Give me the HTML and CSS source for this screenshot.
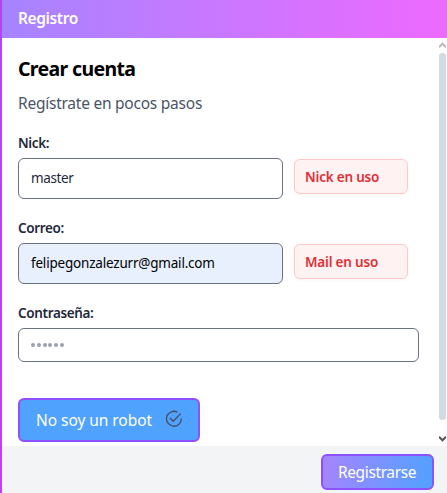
FILE: index.html
```html
<!DOCTYPE html>
<html lang="es">
<head>
<meta charset="utf-8">
<title>Registro</title>
<link rel="stylesheet" href="styles.css">
</head>
<body>
<div class="modal">
  <header class="modal-header"><span>Registro</span></header>
  <main class="modal-body">
    <form class="form">
      <h1 class="title"><span>Crear cuenta</span></h1>
      <p class="subtitle"><span>Regístrate en pocos pasos</span></p>
      <div class="field">
        <div class="label"><span class="t-nick">Nick:</span></div>
        <div class="row">
          <div class="input"><span class="t-master">master</span></div>
          <div class="error"><span class="t-error">Nick en uso</span></div>
        </div>
      </div>
      <div class="field">
        <div class="label"><span class="t-correo">Correo:</span></div>
        <div class="row">
          <div class="input autofill"><span class="t-mail">felipegonzalezurr@gmail.com</span></div>
          <div class="error"><span class="t-error">Mail en uso</span></div>
        </div>
      </div>
      <div class="field">
        <div class="label"><span class="t-pass">Contraseña:</span></div>
        <div class="input password"><i></i><i></i><i></i><i></i><i></i><i></i></div>
      </div>
      <div class="robot">
        <span class="t-robot">No soy un robot</span>
        <svg width="18" height="18" viewBox="0 0 18 18" fill="none" stroke="#484c62" stroke-width="1.35" stroke-linecap="round" stroke-linejoin="round"><path d="M11.9 1.9A7.45 7.45 0 1 0 16.4 9"/><path d="M5.2 8.2l3 3L15.4 3.9"/></svg>
      </div>
    </form>
    <div class="scrollbar">
      <svg width="7" height="6" viewBox="0 0 7 6" fill="none" stroke="#b9b9b9" stroke-width="2"><path d="M0 5.2L3.5 1.7 7 5.2"/></svg>
      <div class="thumb"></div>
      <svg width="7" height="6" viewBox="0 0 7 6" fill="none" stroke="#555" stroke-width="2"><path d="M0 .8L3.5 4.3 7 .8"/></svg>
    </div>
  </main>
  <footer class="modal-footer"><div class="submit"><span class="t-submit">Registrarse</span></div></footer>
</div>
</body>
</html>
```
FILE: styles.css
```css
* { box-sizing: border-box; }
body { margin: 0; font-family: "Noto Sans", "Open Sans", sans-serif; font-size: 14px; color: #1e2939; background: #fff; }
span { white-space: nowrap; }
.modal { width: 447px; height: 493px; display: flex; flex-direction: column; overflow: hidden; padding-left: 2px; background: linear-gradient(#ad46ff, #c43cfa) left / 2px 100% no-repeat; }
.modal-header { height: 38px; flex: none; padding-left: 16px; background: linear-gradient(90deg, #a684ff, #ed6aff); color: #fff; font-size: 15.5px; font-weight: 600; line-height: 37px; }
.modal-header span { letter-spacing: -0.4px; }
.modal-body { height: 408px; flex: none; display: flex; justify-content: space-between; background: #fff; }
.form { width: 401px; margin-left: 16px; padding-top: 17px; }
.title { margin: 0; height: 28px; font-size: 19.5px; line-height: 28px; font-weight: 700; color: #000; }
.title span { letter-spacing: -0.65px; }
.subtitle { margin: 6px 0 16px; height: 28px; line-height: 28px; font-size: 15.5px; color: #4a5565; }
.subtitle span { letter-spacing: -0.24px; }
.field { margin-bottom: 20px; }
.label { height: 20px; line-height: 20px; font-size: 13.5px; font-weight: 600; margin-bottom: 5px; }
.field + .field { margin-top: -1px; }
.row { display: flex; gap: 11px; align-items: flex-start; }
.input { width: 265px; height: 41px; border: 1px solid #6a7282; border-radius: 6px; padding-left: 12px; font-size: 13.5px; line-height: 38px; background: #fff; }
.autofill { background: #e8f0fe; color: #000; }
.error { width: 114px; height: 35px; margin-top: 1px; border: 1px solid #ffc9c9; border-radius: 6px; background: #fef2f2; color: #e02f35; font-size: 13.5px; font-weight: 600; line-height: 35px; padding-left: 10px; box-shadow: 0 1px 3px rgba(200, 120, 80, .08); }
.password { width: 401px; height: 34px; display: flex; align-items: center; gap: 2px; }
.password i { width: 4px; height: 4px; border-radius: 50%; background: #99a1af; margin-right: -.2px; }
.robot { margin-top: 36px; width: 182px; height: 44px; border: 2px solid #8e51ff; border-radius: 6px; background: #50a2ff; color: #fff; font-size: 15.5px; display: flex; justify-content: space-between; align-items: center; padding: 0 15px 0 16px; }
.robot svg { margin-top: -2px; }
.scrollbar { width: 8px; padding-top: 4px; }
.scrollbar svg { display: block; }
.thumb { width: 7px; height: 367px; margin: 5px 0 16px; border-radius: 3px; background: #d0dbe3; }
.modal-footer { height: 47px; background: #f3f4f6; display: flex; justify-content: flex-end; padding: 8px 13px 0 0; }
.submit { width: 113px; height: 36px; border: 2px solid #8e51ff; border-radius: 6px; background: linear-gradient(100deg, #a684ff, #50a2ff); color: #fff; font-size: 15.5px; line-height: 33px; padding-left: 15px; }
.t-nick, .t-correo, .t-pass { letter-spacing: -0.35px; }
.t-error { letter-spacing: -0.2px; }
.t-master { letter-spacing: -0.4px; }
.t-mail { letter-spacing: -0.2px; }
.t-robot { letter-spacing: -0.05px; }
.t-submit { letter-spacing: -0.38px; }
```
